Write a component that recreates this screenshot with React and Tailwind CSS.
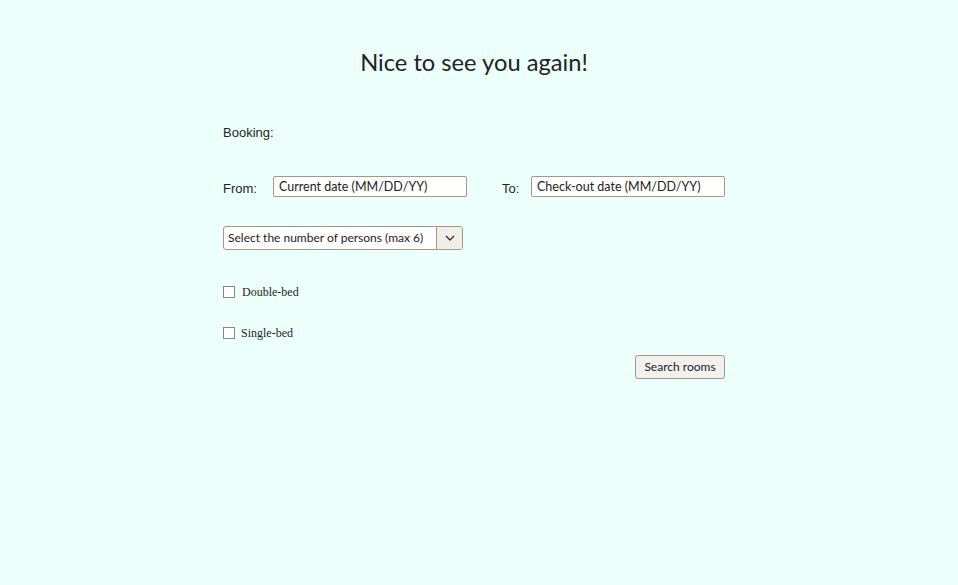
export default function App() {
  return (
    <div className="min-h-[585px] w-full bg-[#edfffb] text-[#1f1f1f]">
      <div className="ml-[223px] w-[502px] pt-[47px]">
        <h1 className="text-center font-['Lato',sans-serif] text-[23.7px] leading-[30px] text-[#222]">
          Nice to see you again!
        </h1>

        <div className="mt-[48px] font-['Liberation_Sans',Arial,sans-serif] text-[13px] leading-[16px]">Booking:</div>

        <div className="mt-[34px] flex items-center font-['Liberation_Sans',Arial,sans-serif] text-[13px]">
          <span className="w-[50px] pt-[4px]">From:</span>
          <input
            className="h-[21px] w-[194px] rounded-[2px] border border-[#a3968b] bg-white px-[5px] font-['Lato',sans-serif] text-[12.5px] text-[#222] outline-none placeholder:text-[#222]"
            placeholder="Current date (MM/DD/YY)"
          />
          <span className="ml-[35px] w-[29px] pt-[4px]">To:</span>
          <input
            className="h-[21px] w-[194px] rounded-[2px] border border-[#a3968b] bg-white px-[5px] font-['Lato',sans-serif] text-[12.5px] text-[#222] outline-none placeholder:text-[#222]"
            placeholder="Check-out date (MM/DD/YY)"
          />
        </div>

        <div className="mt-[27px] flex h-[24px] w-[240px] overflow-hidden rounded-[3px] border border-[#a3968b] bg-white font-['Lato',sans-serif] text-[12px] text-[#222]">
          <div className="flex flex-1 items-center px-[4px]">Select the number of persons (max 6)</div>
          <div className="flex w-[26px] items-center justify-center border-l border-[#a3968b] bg-[#f1eee9]">
            <svg width="10" height="6" viewBox="0 0 10 6" fill="none" stroke="#333" strokeWidth="1.4">
              <path d="M1 1l4 4 4-4" />
            </svg>
          </div>
        </div>

        <div className="mt-[33px] flex items-center font-['Liberation_Serif','Times_New_Roman',serif] text-[12px]">
          <span className="h-[12px] w-[12px] border border-[#8f857c] bg-white" />
          <span className="ml-[7px]">Double-bed</span>
        </div>
        <div className="mt-[23px] flex items-center font-['Liberation_Serif','Times_New_Roman',serif] text-[12px]">
          <span className="h-[12px] w-[12px] border border-[#8f857c] bg-white" />
          <span className="ml-[6px]">Single-bed</span>
        </div>

        <div className="mt-[13px] flex justify-end">
          <button className="h-[24px] w-[90px] rounded-[3px] border border-[#a3968b] bg-[#f3f1ee] font-['Lato',sans-serif] text-[12px] text-[#222]">
            Search rooms
          </button>
        </div>
      </div>
    </div>
  )
}
